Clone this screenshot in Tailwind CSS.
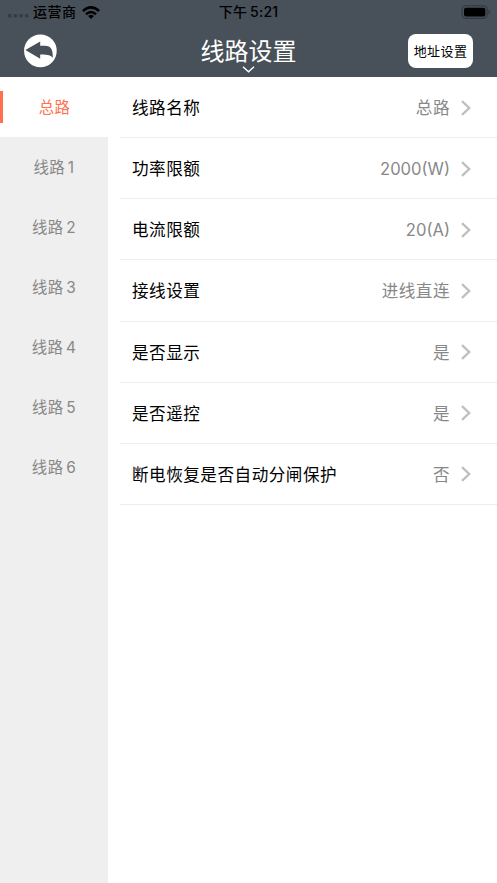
<!DOCTYPE html>
<html lang="zh-CN">
<head>
<meta charset="utf-8">
<title>线路设置</title>
<script src="https://cdn.jsdelivr.net/npm/@tailwindcss/browser@4"></script>
</head>
<body class="w-[497px] h-[883px] overflow-hidden flex flex-col bg-white font-[Inter,'Noto_Sans_CJK_SC',sans-serif]">
<header class="h-[77px] shrink-0 bg-[#485059] text-black">
  <div class="h-6 grid grid-cols-3 items-center text-[14px] leading-6 font-medium">
    <div class="flex items-center pl-2">
      <svg class="w-[22px] h-1 mt-2" viewBox="0 0 22 4" fill="#343b43"><rect width="3.4" height="3.4" rx="1.2"/><rect x="5.7" width="3.4" height="3.4" rx="1.2"/><rect x="11.4" width="3.4" height="3.4" rx="1.2"/><rect x="17" width="3.4" height="3.4" rx="1.2"/></svg>
      <span class="ml-[3px] tracking-[0.5px]">运营商</span>
      <svg class="ml-[5px] w-[18px] h-[13px]" viewBox="0 0 18 13" fill="none" stroke="#000" stroke-width="2.5"><path d="M.9 5.1Q9-2.3 17.1 5.1M4 8.2Q9 3.7 14 8.2"/><path d="M6.1 10Q9 7.6 11.9 10L9 13Z" fill="#000" stroke="none"/></svg>
    </div>
    <div class="text-center whitespace-nowrap tracking-[0.2px] [word-spacing:-1px]">下午 5:21</div>
    <div class="flex justify-end pr-[6px]">
      <svg class="w-[30px] h-[14px]" viewBox="0 0 30 14"><rect x="1.1" y=".8" width="25" height="12.6" rx="3.8" fill="none" stroke="#303740" stroke-width="1.1"/><rect x="3" y="2.7" width="21.3" height="8.8" rx="2" fill="#000"/><path d="M27.6 5Q29.1 5.5 29.1 7.1T27.6 9.3Z" fill="#303740"/></svg>
    </div>
  </div>
  <div class="h-[53px] grid grid-cols-[124px_1fr_124px]">
    <div class="pl-6 pt-[10px]">
      <svg class="w-[33px] h-[34px]" viewBox="0 0 33 34"><circle cx="16.4" cy="16.9" r="16.3" fill="#fff"/><path d="M1.4 16.1 16.2 7.5V11.8C20 11.7 24 11.6 26.3 13.4C28.3 15.2 28.8 19 28.8 23.7C26.5 21.3 24.5 20.4 16.2 20.5V24.7Z" fill="#485059"/></svg>
    </div>
    <div class="flex flex-col items-center pt-[11px]">
      <h1 class="text-[24px] leading-[34px] text-white font-normal whitespace-nowrap">线路设置</h1>
      <svg class="w-[13px] h-[7px] -mt-[3px]" viewBox="0 0 13 7" fill="none" stroke="#fff" stroke-width="1.4"><path d="M1 .8 6.5 5.8 12 .8"/></svg>
    </div>
    <div class="flex justify-end items-start pr-6 pt-[10px]">
      <button class="w-[65px] h-[34px] rounded-[8px] bg-white text-[13px] tracking-[0.4px] whitespace-nowrap leading-[33px]">地址设置</button>
    </div>
  </div>
</header>
<div class="flex flex-1">
  <nav id="nav" class="w-[108px] bg-[#efefef] text-[#888] text-[15.4px] tracking-[0.4px]"></nav>
  <main id="rows" class="flex-1 pl-3 text-[16.6px] tracking-[0.5px] text-black"></main>
</div>
<script>
const nav = ['总路', '线路 1', '线路 2', '线路 3', '线路 4', '线路 5', '线路 6'];
document.getElementById('nav').innerHTML = nav.map((t, i) => i === 0
  ? `<div class="h-[60px] flex items-center bg-white text-[#ff704d]"><i class="w-[3px] h-8 bg-[#ff704d]"></i><span class="flex-1 text-center pr-[2px] pt-[2px]">${t}</span></div>`
  : `<div class="h-[60px] flex items-center justify-center"><span class="pt-[2px] [word-spacing:-2px]">${t}</span></div>`).join('');
const rows = [['线路名称', '总路'], ['功率限额', '2000(W)'], ['电流限额', '20(A)'], ['接线设置', '进线直连'], ['是否显示', '是'], ['是否遥控', '是'], ['断电恢复是否自动分闸保护', '否']];
document.getElementById('rows').innerHTML = rows.map(([a, b]) =>
  `<div class="h-[61.14px] flex items-center pl-3 pr-[26px] border-b border-[#ededed]"><span class="flex-1 pt-[3px]">${a}</span><span class="pt-[3px] text-[#888] ${/\d/.test(b) ? 'tracking-[0px]' : ''}">${b}</span><svg class="ml-[11px] mt-px w-[10px] h-4" viewBox="0 0 10 16" fill="none" stroke="#c0c0c0" stroke-width="2.4"><path d="M1 1.2 8.2 8 1 14.8"/></svg></div>`).join('');
</script>
</body>
</html>
